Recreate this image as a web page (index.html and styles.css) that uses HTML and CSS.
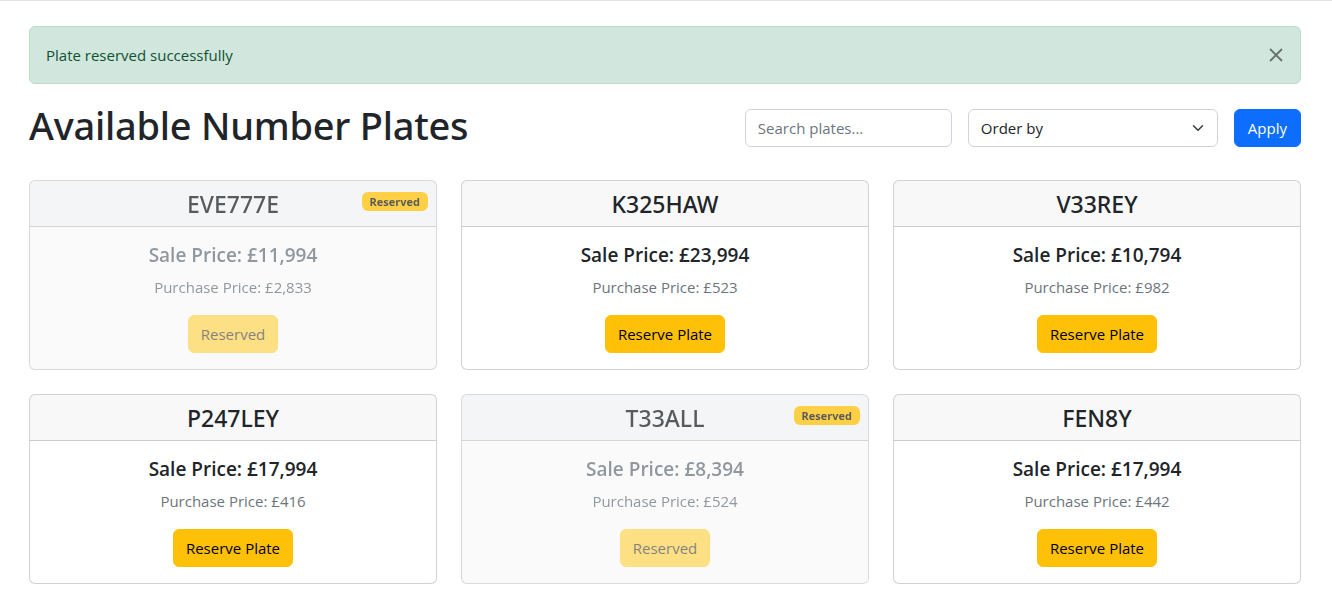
FILE: index.html
```html
<!DOCTYPE html>
<html lang="en">
<head>
<meta charset="utf-8">
<title>Available Number Plates</title>
<link rel="stylesheet" href="styles.css">
</head>
<body>
<div class="topline"></div>
<main class="page">
  <div class="alert">
    <span>Plate reserved successfully</span>
    <button class="btn-close" type="button" aria-label="Close">
      <svg viewBox="0 0 16 16" width="16" height="16"><path d="M2 2 14 14M14 2 2 14" stroke="#000" stroke-width="1.8" fill="none"/></svg>
    </button>
  </div>

  <div class="toolbar">
    <h1 class="title">Available Number Plates</h1>
    <form class="filters">
      <input class="field search" type="text" placeholder="Search plates...">
      <div class="select-wrap">
        <select class="field select">
          <option>Order by</option>
        </select>
        <svg class="chev" viewBox="0 0 16 16" width="16" height="12"><path d="m2 5 6 6 6-6" fill="none" stroke="#343a40" stroke-width="2" stroke-linecap="round" stroke-linejoin="round"/></svg>
      </div>
      <button class="btn btn-primary" type="button">Apply</button>
    </form>
  </div>

  <div class="grid">
    <div class="card reserved">
      <div class="card-header"><h4>EVE777E</h4><span class="badge">Reserved</span></div>
      <div class="card-body">
        <h5 class="muted">Sale Price: £11,994</h5>
        <p class="muted">Purchase Price: £2,833</p>
        <button class="btn btn-warning" disabled>Reserved</button>
      </div>
    </div>
    <div class="card">
      <div class="card-header"><h4>K325HAW</h4></div>
      <div class="card-body">
        <h5>Sale Price: £23,994</h5>
        <p class="muted">Purchase Price: £523</p>
        <button class="btn btn-warning">Reserve Plate</button>
      </div>
    </div>
    <div class="card">
      <div class="card-header"><h4>V33REY</h4></div>
      <div class="card-body">
        <h5>Sale Price: £10,794</h5>
        <p class="muted">Purchase Price: £982</p>
        <button class="btn btn-warning">Reserve Plate</button>
      </div>
    </div>
    <div class="card">
      <div class="card-header"><h4>P247LEY</h4></div>
      <div class="card-body">
        <h5>Sale Price: £17,994</h5>
        <p class="muted">Purchase Price: £416</p>
        <button class="btn btn-warning">Reserve Plate</button>
      </div>
    </div>
    <div class="card reserved">
      <div class="card-header"><h4>T33ALL</h4><span class="badge">Reserved</span></div>
      <div class="card-body">
        <h5 class="muted">Sale Price: £8,394</h5>
        <p class="muted">Purchase Price: £524</p>
        <button class="btn btn-warning" disabled>Reserved</button>
      </div>
    </div>
    <div class="card">
      <div class="card-header"><h4>FEN8Y</h4></div>
      <div class="card-body">
        <h5>Sale Price: £17,994</h5>
        <p class="muted">Purchase Price: £442</p>
        <button class="btn btn-warning">Reserve Plate</button>
      </div>
    </div>
  </div>
</main>
</body>
</html>
```

FILE: styles.css
```css
* { box-sizing: border-box; }

html, body {
  margin: 0;
  padding: 0;
}

body {
  font-family: "Open Sans", "Noto Sans", sans-serif;
  font-size: 15px;
  line-height: 24px;
  color: #212529;
  background: #fff;
}

.topline {
  height: 1px;
  background: #e3e3e3;
}

.page {
  padding: 25px 31px 24px 29px;
}

.alert {
  position: relative;
  padding: 16px 48px 16px 16px;
  margin-bottom: 16px;
  color: #0f5132;
  background: #d1e7dd;
  border: 1px solid #badbcc;
  border-radius: 6px;
}

.btn-close {
  position: absolute;
  top: 0;
  right: 0;
  padding: 20px 16px;
  border: 0;
  background: transparent;
  opacity: 0.5;
  display: flex;
  cursor: pointer;
}

.btn-close svg { display: block; }

.toolbar {
  display: flex;
  justify-content: space-between;
  align-items: center;
  margin-bottom: 24px;
}

.title {
  margin: 0 0 8px;
  padding-top: 2px;
  height: 48px;
  font-family: "Noto Sans", "Open Sans", sans-serif;
  font-size: 38px;
  font-weight: 500;
  line-height: 46px;
  letter-spacing: -0.25px;
}

.filters {
  display: flex;
  gap: 16px;
  align-items: center;
}

.field {
  height: 38px;
  padding: 6px 12px;
  font: inherit;
  font-size: 15px;
  line-height: 24px;
  color: #212529;
  background: #fff;
  border: 1px solid #ced4da;
  border-radius: 6px;
}

.field::placeholder { color: #6c757d; opacity: 1; }

.search { width: 207px; }

.select-wrap {
  position: relative;
  width: 250px;
}

.select {
  width: 100%;
  appearance: none;
  -webkit-appearance: none;
  padding-right: 36px;
}

.chev {
  position: absolute;
  right: 12px;
  top: 13px;
  pointer-events: none;
}

.btn {
  display: inline-block;
  height: 38px;
  padding: 6px 12px;
  font: inherit;
  font-size: 15px;
  line-height: 24px;
  border: 1px solid transparent;
  border-radius: 6px;
  cursor: pointer;
}

.btn-primary {
  padding: 6px 13px;
  color: #fff;
  background: #0d6efd;
  border-color: #0d6efd;
}

.btn-warning {
  color: #000;
  background: #ffc107;
  border-color: #ffc107;
}

.btn-warning:disabled {
  opacity: 0.65;
  cursor: default;
}

.grid {
  display: grid;
  grid-template-columns: repeat(3, 1fr);
  gap: 24px;
}

.card {
  position: relative;
  background: #fff;
  border: 1px solid rgba(0, 0, 0, 0.175);
  border-radius: 6px;
  overflow: hidden;
}

.card.reserved {
  background: #f8f9fa;
  opacity: 0.75;
}

.card-header {
  padding: 8px 16px;
  background: rgba(33, 37, 41, 0.03);
  border-bottom: 1px solid rgba(0, 0, 0, 0.175);
  text-align: center;
}

.card-header h4 {
  margin: 0;
  padding-top: 1px;
  height: 29px;
  font-family: "Noto Sans", "Open Sans", sans-serif;
  font-size: 23px;
  font-weight: 500;
  line-height: 28px;
}

.badge {
  position: absolute;
  top: 11px;
  right: 8px;
  padding: 3px 8px;
  font-size: 11px;
  font-weight: 700;
  line-height: 13px;
  color: #212529;
  background: #ffc107;
  border-radius: 6px;
}

.card-body {
  padding: 16px;
  text-align: center;
}

.card-body h5 {
  margin: 0 0 8px;
  padding-top: 1px;
  height: 24px;
  font-size: 19px;
  font-weight: 600;
  line-height: 23px;
}

.card-body p {
  margin: 0 0 16px;
  font-size: 15px;
  line-height: 24px;
}

.muted { color: #6c757d; }
```
